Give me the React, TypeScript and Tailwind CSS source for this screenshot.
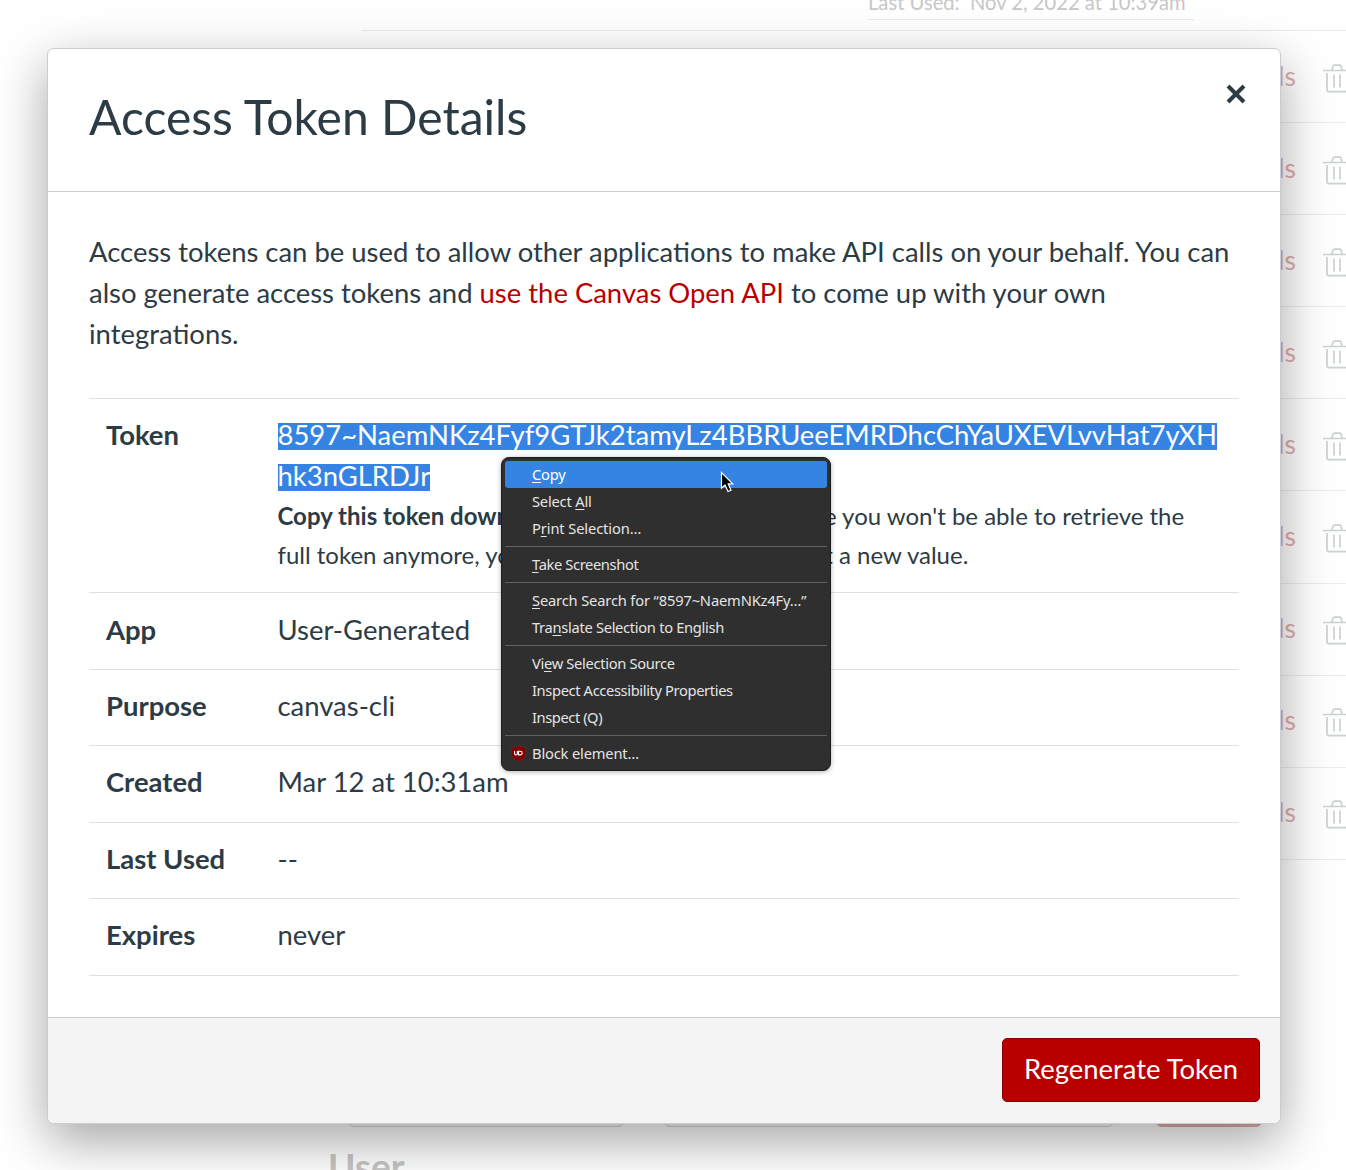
import type { ReactNode } from "react";

const details: [string, string][] = [
  ["App", "User-Generated"],
  ["Purpose", "canvas-cli"],
  ["Created", "Mar 12 at 10:31am"],
  ["Last Used", "--"],
  ["Expires", "never"],
];

function Trash() {
  return (
    <svg width="30" height="32" viewBox="0 0 30 32" fill="none" stroke="#ccd1d3" strokeWidth="1.7" className="shrink-0">
      <path d="M0 6.500h28M8.800 6.300l1.300-4.200q.3-.9 1.200-.9h5.400q.9 0 1.200.9L19.200 6.300M4 9v16.500q0 2.200 2.200 2.200h15.600q2.200 0 2.200-2.200V9M11 10.500v13M17 10.500v13" />
    </svg>
  );
}

function Backdrop() {
  return (
    <div className="col-start-1 row-start-1 h-[1170px] overflow-hidden">
      <div className="ml-[362px] h-[31px] border-b border-[#eaeaea]">
        <div className="ml-[506px] flex h-5 w-[326px] items-end border-b border-[#eaeaea] pb-[4px]">
          <div className="whitespace-nowrap text-[20.200px] leading-[26px] text-[#c7c7c7]">Last Used:&nbsp; Nov 2, 2022 at 10:39am</div>
        </div>
      </div>
      {Array.from({ length: 9 }, (_, i) => (
        <div key={i} className="ml-[362px] flex h-[92.1px] items-center border-b border-[#ececec]">
          <span className="-mt-[1px] ml-[845px] w-[89px] shrink-0 text-right text-[26.500px] text-[#e2adad]">details</span>
          <span className="ml-[27px] mt-[6px] shrink-0"><Trash /></span>
        </div>
      ))}
      <div className="flex h-[267px] items-end pl-[348px]">
        <div className="h-10 w-[276px] rounded-md border border-[#d5d8da]" />
        <div className="ml-10 h-10 w-[450px] rounded-md border border-[#d5d8da]" />
        <div className="ml-[42px] h-10 w-[106px] rounded-md bg-[#e5adad]" />
      </div>
      <div className="ml-[328px] mt-[16px] text-[37px] font-bold leading-[46px] text-[#c6c6c6]">User</div>
    </div>
  );
}

function Row({ label, children }: { label: string; children: ReactNode }) {
  return (
    <div className="flex h-[76.6px] border-b border-[#dfe0e1] pl-[17px] pt-[15px] nth-3:pt-[16px]">
      <div className="w-[171.5px] shrink-0 font-bold">{label}</div>
      <div>{children}</div>
    </div>
  );
}

function Item({ children, active, icon, tracking = "" }: { children: ReactNode; active?: boolean; icon?: ReactNode; tracking?: string }) {
  return (
    <div className={`flex h-[27px] items-center rounded-[3px] ${active ? "bg-[#3584e4] text-white" : ""}`}>
      <span className="flex w-[27px] justify-center">{icon}</span>
      <span className={`-mt-[2px] whitespace-nowrap ${tracking}`}>{children}</span>
    </div>
  );
}

function U({ children }: { children: string }) {
  return <span className="underline decoration-1 underline-offset-2">{children}</span>;
}

const Separator = () => <div className="my-1 h-px bg-[#606060]" />;

const Shield = () => (
  <svg width="17" height="17" viewBox="0 0 16 16" className="shrink-0">
    <path d="M8 .5Q11 2.500 14.800 2.500V7.500Q14.800 13 8 15.600Q1.200 13 1.200 7.500V2.500Q5 2.500 8 .5Z" fill="#800000" stroke="#5c3030" strokeWidth=".6" />
    <path d="M4.300 5.700v2.200q0 1.400 1.300 1.400t1.300-1.400V5.700M8 5.800v3.500h1.700a1.750 1.750 0 0 0 0-3.500Z" fill="none" stroke="#fff" strokeWidth="1" />
  </svg>
);

function ContextMenu() {
  return (
    <div className="absolute left-[501px] top-[457px] h-[314px] w-[330px] rounded-[8px] border border-[#1c1c1c] bg-[#2f2f2f] px-[3px] pt-[3px] font-['Noto_Sans',sans-serif] text-[14.700px] leading-[20px] text-[#e4e4e4] shadow-[0_1px_5px_rgba(0,0,0,0.3)]">
      <Item active tracking="tracking-[-0.2px]"><U>C</U>opy</Item>
      <Item tracking="tracking-[-0.2px]">Select <U>A</U>ll</Item>
      <Item tracking="tracking-[-0.12px]">P<U>r</U>int Selection…</Item>
      <Separator />
      <Item tracking="tracking-[-0.38px]"><U>T</U>ake Screenshot</Item>
      <Separator />
      <Item tracking="tracking-[-0.16px]"><U>S</U>earch Search for “8597~NaemNKz4Fy…”</Item>
      <Item tracking="tracking-[-0.31px]">Tra<U>n</U>slate Selection to English</Item>
      <Separator />
      <Item tracking="tracking-[-0.32px]">Vi<U>e</U>w Selection Source</Item>
      <Item tracking="tracking-[-0.37px]">Inspect Accessibility Properties</Item>
      <Item tracking="tracking-[-0.43px]">Inspect (Q)</Item>
      <Separator />
      <Item icon={<Shield />} tracking="tracking-[-0.17px]">Block element…</Item>
      <svg className="absolute left-[218px] top-[13px]" width="16" height="24" viewBox="0 0 16 24">
        <path d="M1.500 1.500V17.200L5 14L8 20.500L11 19.200L8.200 12.800H12.700Z" fill="#000" stroke="#fff" strokeWidth="1.200" />
      </svg>
    </div>
  );
}

function Selected({ children }: { children: string }) {
  return (
    <div className="flex h-[41px] pt-[9px]">
      <span className="h-[27px] bg-[#3584e4] leading-[23px] text-white">{children}</span>
    </div>
  );
}

export default function App() {
  return (
    <div className="relative grid h-[1170px] w-[1346px] overflow-hidden bg-white font-['Lato',sans-serif] text-[27.440px] leading-[41px] text-[#2d3b45]">
      <Backdrop />
      <main className="z-10 col-start-1 row-start-1 ml-[47px] mt-[48px] flex h-[1076px] w-[1234px] flex-col overflow-hidden rounded-[7px] border border-[#c7cdd1] bg-white shadow-[0_17px_51px_rgba(0,0,0,0.36)]">
        <header className="flex h-[143px] shrink-0 justify-between border-b border-[#c7cdd1] pl-[41px] pr-[34px]">
          <h1 className="mt-[32px] text-[48.060px] leading-[72px]">Access Token Details</h1>
          <button aria-label="Close" className="mt-[35px] h-[20px] w-[20px]">
            <svg width="20" height="20" viewBox="0 0 20 20" stroke="#2d3b45" strokeWidth="4"><path d="M2 2L18 18M18 2L2 18" /></svg>
          </button>
        </header>
        <section className="h-[825px] shrink-0 px-[41px] pt-[39px]">
          <p className="h-[167px] whitespace-nowrap">
            Access tokens can be used to allow other applications to make API calls on your behalf. You can<br />
            also generate access tokens and <a className="text-[#b90000]">use the Canvas Open API</a> to come up with your own<br />
            integrations.
          </p>
          <div className="flex h-[195px] border-y border-[#dfe0e1] pl-[17px] pt-[15px]">
            <div className="w-[171.5px] shrink-0 font-bold">Token</div>
            <div className="whitespace-nowrap">
              <Selected>8597~NaemNKz4Fyf9GTJk2tamyLz4BBRUeeEMRDhcChYaUXEVLvvHat7yXH</Selected>
              <Selected>hk3nGLRDJr</Selected>
              <div className="text-[24px] leading-[39px]">
                <b>Copy this token down now</b>. Once you leave this page you won't be able to retrieve the<br />
                full token anymore, you'll have to regenerate it to get a new value.
              </div>
            </div>
          </div>
          {details.map(([label, value]) => <Row key={label} label={label}>{value}</Row>)}
        </section>
        <footer className="flex grow items-start justify-end border-t border-[#c7cdd1] bg-[#f4f4f4] pr-[20px] pt-[20px]">
          <button className="h-[64px] w-[258px] rounded-[5px] border border-[#8c0000] bg-[#b90000] pb-[3px] text-white">Regenerate Token</button>
        </footer>
      </main>
      <div className="absolute inset-0 z-20"><ContextMenu /></div>
    </div>
  );
}
